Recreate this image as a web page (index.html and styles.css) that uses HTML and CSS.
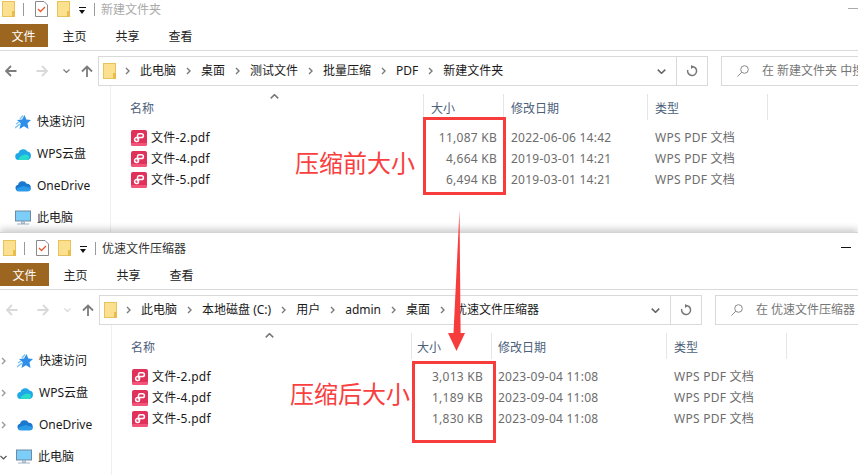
FILE: index.html
```html
<!DOCTYPE html>
<html lang="zh-CN">
<head>
<meta charset="utf-8">
<title>压缩前后文件大小对比</title>
<link rel="stylesheet" href="styles.css">
</head>
<body>
<svg class="defs" aria-hidden="true">
  <symbol id="folder" viewBox="0 0 13 16"><rect x=".5" y=".5" width="12" height="15" fill="#fbe08f" stroke="#e8c35c"/><rect x="10" y="10" width="3" height="6" fill="#e9bd4c"/></symbol>
  <symbol id="doc" viewBox="0 0 13 16"><path d="M.5.5H9L12.5 4V15.500H.5Z" fill="#fff" stroke="#8a8a8a"/><path d="M3 8l2.500 2.500L10 6" fill="none" stroke="#e8582a" stroke-width="1.300"/></symbol>
  <symbol id="pdf" viewBox="0 0 16 16"><rect width="16" height="16" rx="2" fill="#e0315a"/><path d="M0 13H16V14A2 2 0 0 1 14 16H2A2 2 0 0 1 0 14Z" fill="#f4547a"/><path d="M6.500 9.500V5.500A1.800 1.800 0 0 1 8.300 3.800H10.500A1.900 1.900 0 0 1 10.500 7.600H5.500A1.900 1.900 0 0 0 5.500 11.400H6A1.500 1.500 0 0 0 7.500 9.900V7.600" fill="none" stroke="#fff" stroke-width="1.500"/></symbol>
  <symbol id="star" viewBox="0 0 16 16"><path d="M9.500 1l1.800 4.500 4.700.5-3.500 3.200L13.500 15 9 12.300 4.500 15l1.200-5.700L2 6l5-.5Z" fill="#2f8fe8"/><path d="M0 14l5-4M1 10l3-2M8 1.500L5 5" stroke="#7cc4f2" stroke-width="1.400"/></symbol>
  <symbol id="wps" viewBox="0 0 16 14"><path d="M4 13a3.500 3.500 0 0 1-.5-7A5 5 0 0 1 12.500 4.500 4.300 4.300 0 0 1 12 13Z" fill="#1fa7e8"/><path d="M3 13a8 8 0 0 1 10-5 3 3 0 0 1-1 5Z" fill="#27dcc8"/></symbol>
  <symbol id="cloud" viewBox="0 0 17 12"><path d="M4 11.500a3.500 3.500 0 0 1-.8-6.900A5 5 0 0 1 12.400 3.500 4 4 0 0 1 13 11.500Z" fill="#1b78cf"/><path d="M2 11.500h12.500a2.500 2.500 0 0 0 2-3.500L9 6 2 8.500Z" fill="#2a9be8"/></symbol>
  <symbol id="pc" viewBox="0 0 16 15"><rect x=".5" y=".5" width="15" height="10" fill="#7ccdf7" stroke="#6f8ba3"/><path d="M6.500 11h3v2h-3ZM2 13.500h12" stroke="#9fb2c2" fill="#cfd8df"/></symbol>
  <symbol id="caret" viewBox="0 0 7 4"><path d="M.5.500L3.500 3.500 6.500.500" fill="none" stroke="currentColor" stroke-width="1.200"/></symbol>
  <symbol id="arrow" viewBox="0 0 12 12"><path d="M11.500 6H1M6 1L1 6l5 5" fill="none" stroke="currentColor" stroke-width="1.800"/></symbol>
  <symbol id="up" viewBox="0 0 12 12"><path d="M6 12V1.500M1 6.500l5-5 5 5" fill="none" stroke="currentColor" stroke-width="1.800"/></symbol>
  <symbol id="crumb" viewBox="0 0 5 8"><path d="M1 1l3 3-3 3" fill="none" stroke="currentColor" stroke-width="1.400"/></symbol>
  <symbol id="refresh" viewBox="0 0 12 12"><path d="M6 1.500A4.500 4.500 0 1 1 1.700 5" fill="none" stroke="currentColor" stroke-width="1.500"/><path d="M5 0v4l3-2Z" fill="currentColor"/></symbol>
  <symbol id="search" viewBox="0 0 12 12"><circle cx="7.500" cy="4.500" r="3.800" fill="none" stroke="currentColor"/><path d="M4.800 7.200L.5 11.500" stroke="currentColor"/></symbol>
</svg>

<main class="desk">
  <section class="win win-a">
    <header class="title">
      <svg class="i-folder"><use href="#folder"/></svg><span class="tsep"></span>
      <svg class="i-doc"><use href="#doc"/></svg>
      <svg class="i-folder"><use href="#folder"/></svg>
      <span class="qat"></span><span class="tsep tsep-end"></span>
      <span class="title-text dim">新建文件夹</span>
      <span class="minimize dim-min"></span>
    </header>
    <nav class="tabs"><span class="tab tab-file">文件</span><span class="tab">主页</span><span class="tab">共享</span><span class="tab">查看</span></nav>
    <div class="navbar">
      <div class="navbtns">
        <svg class="nb"><use href="#arrow"/></svg>
        <svg class="nb off flip"><use href="#arrow"/></svg>
        <svg class="nb-drop"><use href="#caret"/></svg>
        <svg class="nb"><use href="#up"/></svg>
      </div>
      <div class="address">
        <svg class="i-folder addr-folder"><use href="#folder"/></svg>
        <div class="crumbs">
          <svg class="cv"><use href="#crumb"/></svg><span>此电脑</span>
          <svg class="cv"><use href="#crumb"/></svg><span>桌面</span>
          <svg class="cv"><use href="#crumb"/></svg><span>测试文件</span>
          <svg class="cv"><use href="#crumb"/></svg><span>批量压缩</span>
          <svg class="cv"><use href="#crumb"/></svg><span>PDF</span>
          <svg class="cv"><use href="#crumb"/></svg><span>新建文件夹</span>
        </div>
        <svg class="addr-drop"><use href="#caret"/></svg>
        <div class="addr-refresh"><svg class="i-refresh"><use href="#refresh"/></svg></div>
      </div>
      <div class="searchbox"><svg class="i-search"><use href="#search"/></svg><span>在 新建文件夹 中搜索</span></div>
    </div>
    <div class="body">
      <aside class="side">
        <div class="side-item"><span class="exp"></span><svg class="i-side"><use href="#star"/></svg>快速访问</div>
        <div class="side-item"><span class="exp"></span><svg class="i-side"><use href="#wps"/></svg>WPS云盘</div>
        <div class="side-item"><span class="exp"></span><svg class="i-side"><use href="#cloud"/></svg>OneDrive</div>
        <div class="side-item"><span class="exp"></span><svg class="i-side"><use href="#pc"/></svg>此电脑</div>
      </aside>
      <div class="files">
        <div class="row head">
          <span class="c-name">名称<svg class="sort"><use href="#caret"/></svg></span><span class="c-size">大小</span><span class="c-date">修改日期</span><span class="c-type">类型</span><span class="c-rest"></span>
        </div>
        <div class="row item"><span class="c-name"><svg class="i-pdf"><use href="#pdf"/></svg>文件-2.pdf</span><span class="c-size">11,087 KB</span><span class="c-date">2022-06-06 14:42</span><span class="c-type">WPS PDF 文档</span></div>
        <div class="row item"><span class="c-name"><svg class="i-pdf"><use href="#pdf"/></svg>文件-4.pdf</span><span class="c-size">4,664 KB</span><span class="c-date">2019-03-01 14:21</span><span class="c-type">WPS PDF 文档</span></div>
        <div class="row item"><span class="c-name"><svg class="i-pdf"><use href="#pdf"/></svg>文件-5.pdf</span><span class="c-size">6,494 KB</span><span class="c-date">2019-03-01 14:21</span><span class="c-type">WPS PDF 文档</span></div>
      </div>
    </div>
  </section>

  <section class="win win-b">
    <header class="title">
      <svg class="i-folder"><use href="#folder"/></svg><span class="tsep"></span>
      <svg class="i-doc"><use href="#doc"/></svg>
      <svg class="i-folder"><use href="#folder"/></svg>
      <span class="qat"></span><span class="tsep tsep-end"></span>
      <span class="title-text">优速文件压缩器</span>
      <span class="minimize"></span>
    </header>
    <nav class="tabs"><span class="tab tab-file">文件</span><span class="tab">主页</span><span class="tab">共享</span><span class="tab">查看</span></nav>
    <div class="navbar">
      <div class="navbtns">
        <svg class="nb off"><use href="#arrow"/></svg>
        <svg class="nb off flip"><use href="#arrow"/></svg>
        <svg class="nb-drop off"><use href="#caret"/></svg>
        <svg class="nb"><use href="#up"/></svg>
      </div>
      <div class="address">
        <svg class="i-folder addr-folder"><use href="#folder"/></svg>
        <div class="crumbs">
          <svg class="cv"><use href="#crumb"/></svg><span>此电脑</span>
          <svg class="cv"><use href="#crumb"/></svg><span>本地磁盘 (C:)</span>
          <svg class="cv"><use href="#crumb"/></svg><span>用户</span>
          <svg class="cv"><use href="#crumb"/></svg><span>admin</span>
          <svg class="cv"><use href="#crumb"/></svg><span>桌面</span>
          <svg class="cv"><use href="#crumb"/></svg><span>优速文件压缩器</span>
        </div>
        <svg class="addr-drop"><use href="#caret"/></svg>
        <div class="addr-refresh"><svg class="i-refresh"><use href="#refresh"/></svg></div>
      </div>
      <div class="searchbox"><svg class="i-search"><use href="#search"/></svg><span>在 优速文件压缩器</span></div>
    </div>
    <div class="body">
      <aside class="side">
        <div class="side-item"><svg class="exp"><use href="#crumb"/></svg><svg class="i-side"><use href="#star"/></svg>快速访问</div>
        <div class="side-item"><svg class="exp"><use href="#crumb"/></svg><svg class="i-side"><use href="#wps"/></svg>WPS云盘</div>
        <div class="side-item"><svg class="exp"><use href="#crumb"/></svg><svg class="i-side"><use href="#cloud"/></svg>OneDrive</div>
        <div class="side-item"><svg class="exp open"><use href="#caret"/></svg><svg class="i-side"><use href="#pc"/></svg>此电脑</div>
      </aside>
      <div class="files">
        <div class="row head">
          <span class="c-name">名称<svg class="sort"><use href="#caret"/></svg></span><span class="c-size">大小</span><span class="c-date">修改日期</span><span class="c-type">类型</span><span class="c-rest"></span>
        </div>
        <div class="row item"><span class="c-name"><svg class="i-pdf"><use href="#pdf"/></svg>文件-2.pdf</span><span class="c-size">3,013 KB</span><span class="c-date">2023-09-04 11:08</span><span class="c-type">WPS PDF 文档</span></div>
        <div class="row item"><span class="c-name"><svg class="i-pdf"><use href="#pdf"/></svg>文件-4.pdf</span><span class="c-size">1,189 KB</span><span class="c-date">2023-09-04 11:08</span><span class="c-type">WPS PDF 文档</span></div>
        <div class="row item"><span class="c-name"><svg class="i-pdf"><use href="#pdf"/></svg>文件-5.pdf</span><span class="c-size">1,830 KB</span><span class="c-date">2023-09-04 11:08</span><span class="c-type">WPS PDF 文档</span></div>
      </div>
    </div>
  </section>

  <div class="mark box-a"></div>
  <div class="mark box-b"></div>
  <div class="note note-a">压缩前大小</div>
  <div class="note note-b">压缩后大小</div>
  <svg class="pointer" viewBox="0 0 20 142"><path d="M13.500 0L14.600 123H19L10.500 141 2 123H7.500Z" fill="#f73c3c"/></svg>
</main>
</body>
</html>
```
FILE: styles.css
```css
* { box-sizing: border-box; }
html, body { margin: 0; padding: 0; }
body {
  background: #fff;
  color: #1a1a1a;
  font: 12px/16px "Noto Sans", "Noto Sans CJK SC", sans-serif;
}
.defs { position: absolute; width: 0; height: 0; }
.desk { position: relative; width: 858px; height: 475px; overflow: hidden; }

.win { display: flex; flex-direction: column; background: #fff; overflow: hidden; }
.win-a {
  width: 859px; height: 232px; margin-left: -1px;
  --cols: 313px 80px 144px 120px 1fr;
  --addr: 610px;
  --size-pad: 7px;
  --size-head: 7px;
  --date-pad: 7px;
}
.win-b {
  position: relative; width: 858px; height: 243px;
  padding-top: 6px;
  border-top: 1px solid #d4d4d4;
  box-shadow: 0 -3px 7px rgba(0,0,0,.2);
  --cols: 300px 80px 175px 120px 1fr;
  --addr: 603px;
  --size-pad: 9px;
  --size-head: 5px;
  --date-pad: 6px;
}

.title { flex: none; display: flex; align-items: flex-start; height: 24px; padding: 1px 0 0 3px; position: relative; }
.i-folder { width: 13px; height: 16px; flex: none; }
.i-doc { width: 13px; height: 16px; margin: 0 9px 0 11px; flex: none; }
.tsep { width: 1px; height: 13px; margin: 2px 0 0 8px; background: #9a9a9a; }
.tsep-end { margin-left: 8px; }
.qat { width: 7px; height: 7px; margin: 6px 0 0 9px; border-top: 1px solid #111; position: relative; }
.qat::after { content: ""; position: absolute; left: 0; top: 2px; border: 3.500px solid transparent; border-top: 4px solid #111; border-bottom: 0; }
.title-text { margin: 1px 0 0 6px; font-size: 12px; color: #333; }
.title-text.dim { color: #aaa; }
.minimize { position: absolute; right: 7px; top: 8px; width: 10px; height: 1px; background: #111; }
.minimize.dim-min { right: 0; background: #aaa; }

.tabs { flex: none; display: flex; height: 26.500px; border-bottom: 1px solid #dadada; padding-bottom: 3px; }
.tab { padding: 1px 14.500px 0; line-height: 23px; color: #222; }
.tab-file { width: 49px; padding: 1px 0 0; text-align: center; background: #9c6620; color: #fff; }

.navbar { flex: none; display: flex; height: 30px; margin-top: 5.500px; }
.navbtns { flex: none; width: 99px; display: flex; align-items: center; padding-left: 6px; color: #7c7c7c; }
.nb { width: 12px; height: 12px; flex: none; margin-right: 19px; }
.nb:last-child { margin: 0 0 0 11px; }
.nb.flip { transform: scaleX(-1); margin-right: 15px; }
.nb.off { color: #d9d9d9; }
.nb-drop { width: 7px; height: 4px; flex: none; }
.nb-drop.off { color: #d9d9d9; }
.address { flex: none; width: var(--addr); display: flex; align-items: center; border: 1px solid #d9d9d9; padding-left: 4px; }
.crumbs { flex: 1; min-width: 0; display: flex; align-items: center; white-space: nowrap; padding-left: 9px; }
.cv { width: 5px; height: 8px; margin: 0 10px; color: #7a7a7a; flex: none; }
.cv:first-child { margin-left: 0; margin-right: 10px; }
.addr-drop { width: 9px; height: 5px; color: #666; margin-right: 10px; flex: none; }
.addr-refresh { flex: none; width: 31px; height: 100%; border-left: 1px solid #d9d9d9; display: flex; align-items: center; justify-content: center; color: #777; }
.i-refresh { width: 12px; height: 12px; }
.searchbox { flex: none; width: 220px; margin-left: 13px; display: flex; align-items: center; white-space: nowrap; border: 1px solid #d9d9d9; border-right: 0; padding-left: 15px; color: #767676; }
.i-search { width: 12px; height: 12px; margin-right: 13px; flex: none; color: #8a8a8a; }

.body { flex: 1; min-height: 0; display: flex; }
.side { flex: none; width: 112px; padding-top: 20px; border-right: 1px solid #efefef; }
.side-item { display: flex; align-items: center; height: 32px; white-space: nowrap; }
.exp { width: 16px; flex: none; }
svg.exp { width: 5px; height: 8px; margin: 0 11px 0 1px; color: #9a9a9a; }
svg.exp.open { width: 7px; height: 5px; margin: 0 9px 0 0; color: #555; }
.i-side { width: 16px; height: 16px; margin-right: 6px; flex: none; }

.files { flex: 1; min-width: 0; padding-top: 8px; }
.row { display: grid; grid-template-columns: var(--cols); align-items: center; white-space: nowrap; }
.head { height: 26px; margin-bottom: 7px; color: #4c607a; align-items: stretch; }
.head > span { display: flex; align-items: center; padding-top: 3px; border-right: 1px solid #e5e5e5; position: relative; }
.head .c-name { padding-left: 19px; }
.head .c-size { padding-left: var(--size-head); }
.head .c-date { padding-left: var(--date-pad); }
.head .c-type { padding-left: 7px; }
.head .c-rest { border-right: 0; }
.sort { position: absolute; left: calc(50% + 3px); top: 0; width: 9px; height: 5px; color: #777; transform: scaleY(-1); }
.item { height: 21px; letter-spacing: .25px; }
.item .c-name { display: flex; align-items: center; padding-left: 20px; color: #1a1a1a; }
.i-pdf { width: 16px; height: 16px; margin-right: 4px; flex: none; }
.item .c-size { text-align: right; padding-right: var(--size-pad); color: #6d6d6d; }
.item .c-date { padding-left: var(--date-pad); color: #6d6d6d; }
.item .c-type { padding-left: 7px; color: #6d6d6d; }

.mark { position: absolute; border: 3px solid #f73c3c; }
.box-a { left: 423px; top: 117px; width: 83px; height: 78px; }
.box-b { left: 412px; top: 361px; width: 84px; height: 82px; }
.note { position: absolute; font-size: 24px; line-height: 32px; color: #f9403f; white-space: nowrap; }
.note-a { left: 295px; top: 147px; }
.note-b { left: 290px; top: 378px; }
.pointer { position: absolute; left: 446px; top: 210px; width: 20px; height: 142px; }
```
